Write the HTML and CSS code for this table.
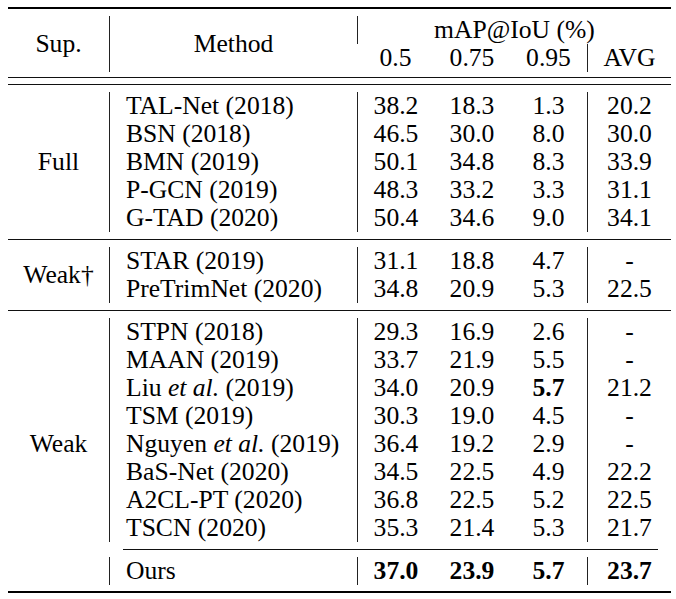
FILE: index.html
```html
<!DOCTYPE html>
<html lang="en">
<head>
<meta charset="utf-8">
<title>mAP@IoU results</title>
<link rel="stylesheet" href="styles.css">
</head>
<body>
<div class="page">
<table class="results">
  <colgroup>
    <col class="c-sup"><col class="c-method"><col class="c-num1"><col class="c-num2"><col class="c-num3"><col class="c-avg">
  </colgroup>
  <tbody>
    <tr class="rule-thick"><td colspan="6"></td></tr>
    <tr class="gap g7"><td colspan="6"></td></tr>
    <tr>
      <td rowspan="2">Sup.</td>
      <td rowspan="2" class="vl">Method</td>
      <td colspan="4" class="vl">mAP@IoU (%)</td>
    </tr>
    <tr>
      <td>0.5</td><td>0.75</td><td>0.95</td><td class="vl">AVG</td>
    </tr>
    <tr class="gap g5"><td colspan="6"></td></tr>
    <tr class="rule"><td colspan="6"></td></tr>
    <tr class="gap g6"><td colspan="6"></td></tr>
    <tr class="rule"><td colspan="6"></td></tr>
    <tr class="gap g7"><td colspan="6"></td></tr>

    <tr><td rowspan="5">Full</td><td class="vl m">TAL-Net (2018)</td><td class="vl">38.2</td><td>18.3</td><td>1.3</td><td class="vl">20.2</td></tr>
    <tr><td class="vl m">BSN (2018)</td><td class="vl">46.5</td><td>30.0</td><td>8.0</td><td class="vl">30.0</td></tr>
    <tr><td class="vl m">BMN (2019)</td><td class="vl">50.1</td><td>34.8</td><td>8.3</td><td class="vl">33.9</td></tr>
    <tr><td class="vl m">P-GCN (2019)</td><td class="vl">48.3</td><td>33.2</td><td>3.3</td><td class="vl">31.1</td></tr>
    <tr><td class="vl m">G-TAD (2020)</td><td class="vl">50.4</td><td>34.6</td><td>9.0</td><td class="vl">34.1</td></tr>

    <tr class="gap g7"><td colspan="6"></td></tr>
    <tr class="rule"><td colspan="6"></td></tr>
    <tr class="gap g7"><td colspan="6"></td></tr>

    <tr><td rowspan="2">Weak†</td><td class="vl m">STAR (2019)</td><td class="vl">31.1</td><td>18.8</td><td>4.7</td><td class="vl">-</td></tr>
    <tr><td class="vl m">PreTrimNet (2020)</td><td class="vl">34.8</td><td>20.9</td><td>5.3</td><td class="vl">22.5</td></tr>

    <tr class="gap g7"><td colspan="6"></td></tr>
    <tr class="rule"><td colspan="6"></td></tr>
    <tr class="gap g7"><td colspan="6"></td></tr>

    <tr><td></td><td class="vl m">STPN (2018)</td><td class="vl">29.3</td><td>16.9</td><td>2.6</td><td class="vl">-</td></tr>
    <tr><td></td><td class="vl m">MAAN (2019)</td><td class="vl">33.7</td><td>21.9</td><td>5.5</td><td class="vl">-</td></tr>
    <tr><td></td><td class="vl m">Liu <i>et al.</i> (2019)</td><td class="vl">34.0</td><td>20.9</td><td><b>5.7</b></td><td class="vl">21.2</td></tr>
    <tr><td></td><td class="vl m">TSM (2019)</td><td class="vl">30.3</td><td>19.0</td><td>4.5</td><td class="vl">-</td></tr>
    <tr><td>Weak</td><td class="vl m">Nguyen <i>et al.</i> (2019)</td><td class="vl">36.4</td><td>19.2</td><td>2.9</td><td class="vl">-</td></tr>
    <tr><td></td><td class="vl m">BaS-Net (2020)</td><td class="vl">34.5</td><td>22.5</td><td>4.9</td><td class="vl">22.2</td></tr>
    <tr><td></td><td class="vl m">A2CL-PT (2020)</td><td class="vl">36.8</td><td>22.5</td><td>5.2</td><td class="vl">22.5</td></tr>
    <tr><td></td><td class="vl m">TSCN (2020)</td><td class="vl">35.3</td><td>21.4</td><td>5.3</td><td class="vl">21.7</td></tr>

    <tr class="gap g7"><td colspan="6"></td></tr>
    <tr class="cmid"><td></td><td colspan="5"><div class="cmid-line"></div></td></tr>
    <tr class="gap g7"><td colspan="6"></td></tr>

    <tr><td></td><td class="vl m">Ours</td><td class="vl"><b>37.0</b></td><td><b>23.9</b></td><td><b>5.7</b></td><td class="vl"><b>23.7</b></td></tr>

    <tr class="gap g6"><td colspan="6"></td></tr>
    <tr class="rule-thick"><td colspan="6"></td></tr>
  </tbody>
</table>
</div>
</body>
</html>
```

FILE: styles.css
```css
* {
  box-sizing: border-box;
}

body {
  margin: 0;
  background: #ffffff;
}

.page {
  padding: 7px 0 0 8px;
}

.results {
  border-collapse: separate;
  border-spacing: 0;
  table-layout: fixed;
  width: 663px;
  font-family: "Liberation Serif", "Times New Roman", serif;
  font-size: 25.6px;
  color: #000;
}

.c-sup { width: 101px; }
.c-method { width: 248px; }
.c-num1 { width: 77px; }
.c-num2 { width: 76px; }
.c-num3 { width: 77px; }
.c-avg { width: 84px; }

.results td {
  padding: 0;
  height: 28px;
  line-height: 28px;
  text-align: center;
  vertical-align: middle;
  white-space: nowrap;
}

.results td.m {
  text-align: left;
  padding-left: 16px;
}

.results td.vl {
  border-left: 1px solid #222;
}

.results b {
  font-weight: bold;
}

.results tr.gap td,
.results tr.rule td,
.results tr.rule-thick td,
.results tr.cmid td {
  font-size: 0;
  line-height: 0;
  padding: 0;
}

.results tr.g5 td { height: 5px; }
.results tr.g6 td { height: 6px; }
.results tr.g7 td { height: 7px; }

.results tr.rule td {
  height: 1px;
  background: #111;
}

.results tr.rule-thick td {
  height: 2px;
  background: #000;
}

.results tr.cmid td {
  height: 1px;
}

.cmid-line {
  height: 1px;
  margin: 0 13px 0 14px;
  background: #111;
}
```
